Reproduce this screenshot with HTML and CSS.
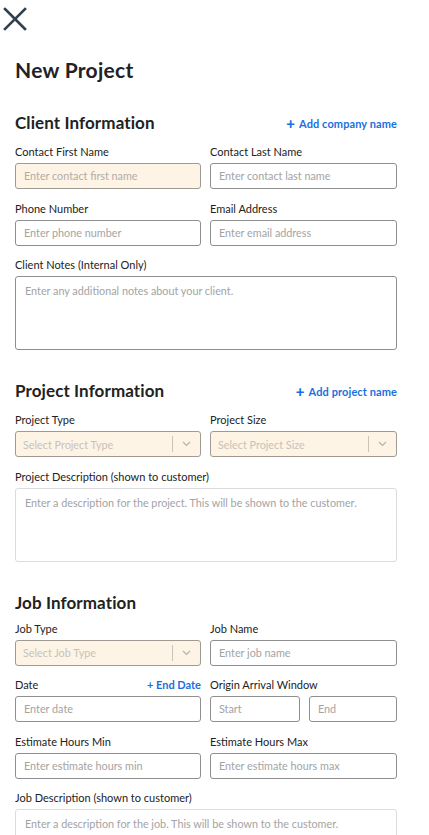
FILE: index.html
```html
<!DOCTYPE html>
<html>
<head>
<meta charset="utf-8">
<link rel="stylesheet" href="styles.css">
</head>
<body>
<div class="page">
  <div class="close">
    <svg width="24" height="24" viewBox="0 0 24 24"><path d="M2 2 L22 22 M22 2 L2 22" stroke="#2f4150" stroke-width="2.6" stroke-linecap="square" fill="none"/></svg>
  </div>
  <h1 class="title">New Project</h1>

  <div class="section-head">
    <h2>Client Information</h2>
    <a class="add-link"><span class="plus">+</span> Add company name</a>
  </div>
  <div class="grid">
    <div class="field">
      <label>Contact First Name</label>
      <div class="input req">Enter contact first name</div>
    </div>
    <div class="field">
      <label>Contact Last Name</label>
      <div class="input">Enter contact last name</div>
    </div>
    <div class="field">
      <label>Phone Number</label>
      <div class="input">Enter phone number</div>
    </div>
    <div class="field">
      <label>Email Address</label>
      <div class="input">Enter email address</div>
    </div>
    <div class="field span">
      <label>Client Notes (Internal Only)</label>
      <div class="textarea dark">Enter any additional notes about your client.</div>
    </div>
  </div>

  <div class="section-head gap">
    <h2>Project Information</h2>
    <a class="add-link"><span class="plus">+</span> Add project name</a>
  </div>
  <div class="grid">
    <div class="field">
      <label>Project Type</label>
      <div class="select"><span class="sel-text">Select Project Type</span><span class="sep"></span><span class="chev"><svg width="9" height="6" viewBox="0 0 9 6"><path d="M1 1 L4.5 4.5 L8 1" stroke="#b8b2aa" stroke-width="1.2" fill="none"/></svg></span></div>
    </div>
    <div class="field">
      <label>Project Size</label>
      <div class="select"><span class="sel-text">Select Project Size</span><span class="sep"></span><span class="chev"><svg width="9" height="6" viewBox="0 0 9 6"><path d="M1 1 L4.5 4.5 L8 1" stroke="#b8b2aa" stroke-width="1.2" fill="none"/></svg></span></div>
    </div>
    <div class="field span">
      <label>Project Description (shown to customer)</label>
      <div class="textarea">Enter a description for the project. This will be shown to the customer.</div>
    </div>
  </div>

  <div class="section-head gap job">
    <h2>Job Information</h2>
  </div>
  <div class="grid">
    <div class="field">
      <label>Job Type</label>
      <div class="select"><span class="sel-text">Select Job Type</span><span class="sep"></span><span class="chev"><svg width="9" height="6" viewBox="0 0 9 6"><path d="M1 1 L4.5 4.5 L8 1" stroke="#b8b2aa" stroke-width="1.2" fill="none"/></svg></span></div>
    </div>
    <div class="field">
      <label>Job Name</label>
      <div class="input">Enter job name</div>
    </div>
    <div class="field">
      <div class="label-row"><label>Date</label><a class="end-date">+ End Date</a></div>
      <div class="input">Enter date</div>
    </div>
    <div class="field">
      <label>Origin Arrival Window</label>
      <div class="pair">
        <div class="input">Start</div>
        <div class="input">End</div>
      </div>
    </div>
    <div class="field">
      <label>Estimate Hours Min</label>
      <div class="input">Enter estimate hours min</div>
    </div>
    <div class="field">
      <label>Estimate Hours Max</label>
      <div class="input">Enter estimate hours max</div>
    </div>
    <div class="field span">
      <label>Job Description (shown to customer)</label>
      <div class="textarea">Enter a description for the job. This will be shown to the customer.</div>
    </div>
  </div>
</div>
</body>
</html>
```

FILE: styles.css
```css
html, body {
  margin: 0;
  padding: 0;
  background: #fff;
}
body {
  font-family: Lato, "Noto Sans", sans-serif;
  color: #222;
  overflow: hidden;
}
.page {
  padding: 7px 32px 40px 15px;
}
.close {
  width: 24px;
  height: 24px;
  margin-left: -12px;
}
.close svg {
  display: block;
}
.title {
  margin: 26px 0 0 0;
  font-size: 21px;
  line-height: 26px;
  font-weight: 700;
  color: #222;
  letter-spacing: 0.3px;
}
.section-head {
  margin-top: 29px;
  height: 22px;
  display: flex;
  justify-content: space-between;
  align-items: center;
  margin-bottom: 11px;
}
.section-head.gap {
  margin-top: 30px;
}
.section-head.job {
  margin-bottom: 8px;
}
.section-head h2 {
  margin: 0;
  font-size: 17px;
  line-height: 22px;
  font-weight: 700;
  color: #222;
  letter-spacing: 0.1px;
}
.add-link {
  color: #1a6fe0;
  font-size: 11px;
  font-weight: 700;
  display: flex;
  align-items: center;
  letter-spacing: 0.1px;
}
.plus {
  font-size: 15px;
  font-weight: 900;
  margin-right: 4px;
  line-height: 14px;
}
.grid {
  display: grid;
  grid-template-columns: 186px 187px;
  column-gap: 9px;
  row-gap: 12.5px;
}
.field {
  display: flex;
  flex-direction: column;
  min-width: 0;
}
.field.span {
  grid-column: 1 / span 2;
}
label {
  font-size: 11px;
  line-height: 14px;
  height: 14px;
  margin-bottom: 4px;
  color: #222;
}
.label-row {
  display: flex;
  justify-content: space-between;
  height: 14px;
  margin-bottom: 4px;
}
.label-row label {
  margin-bottom: 0;
}
.end-date {
  color: #1a6fe0;
  font-size: 11px;
  font-weight: 700;
  line-height: 14px;
}
.input {
  box-sizing: border-box;
  height: 26px;
  border: 1px solid #8f8f8f;
  border-radius: 3px;
  padding: 0 8px;
  font-size: 10.8px;
  line-height: 24px;
  color: #a3a3a3;
  white-space: nowrap;
  overflow: hidden;
}
.input.req {
  background: #fdf4e6;
  border-color: #a09a92;
  color: #b3aca4;
}
.pair {
  display: grid;
  grid-template-columns: 90px 88px;
  column-gap: 9px;
}
.select {
  box-sizing: border-box;
  height: 26px;
  border: 1px solid #a09a92;
  border-radius: 3px;
  background: #fdf4e6;
  display: flex;
  align-items: center;
  padding-left: 7px;
  font-size: 10.8px;
  color: #c8c2ba;
}
.sel-text {
  flex: 1;
  white-space: nowrap;
}
.sep {
  width: 1px;
  height: 16px;
  background: #c9c3bb;
}
.chev {
  width: 27px;
  display: flex;
  justify-content: center;
  align-items: center;
}
.chev svg {
  display: block;
}
.textarea {
  box-sizing: border-box;
  height: 74px;
  border: 1px solid #dcdcdc;
  border-radius: 3px;
  padding: 7px 9px;
  font-size: 10.8px;
  line-height: 14px;
  color: #a3a3a3;
}
.textarea.dark {
  border-color: #8f8f8f;
}
```
